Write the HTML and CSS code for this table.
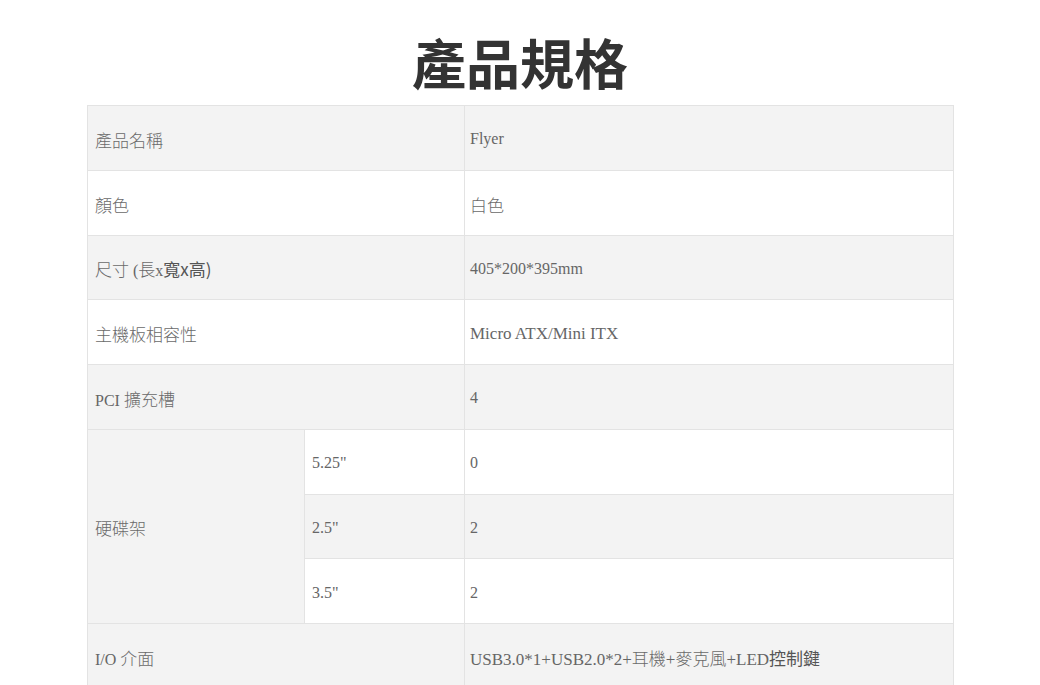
FILE: index.html
```html
<!DOCTYPE html>
<html lang="zh-Hant">
<head>
<meta charset="utf-8">
<title>產品規格</title>
<link rel="stylesheet" href="styles.css">
</head>
<body>
<main class="spec">
  <h1 class="spec-title">產品規格</h1>
  <table class="spec-table">
    <colgroup>
      <col class="c1"><col class="c2"><col class="c3">
    </colgroup>
    <tbody>
      <tr class="gray"><td colspan="2"><span class="cjk">產品名稱</span></td><td class="val">Flyer</td></tr>
      <tr><td colspan="2"><span class="cjk">顏色</span></td><td class="val"><span class="cjk">白色</span></td></tr>
      <tr class="gray"><td colspan="2"><span class="cjk">尺寸</span> (<span class="cjk">長</span>x<span class="sans">寬x高)</span></td><td class="val">405*200*395mm</td></tr>
      <tr><td colspan="2"><span class="cjk">主機板相容性</span></td><td class="val wide">Micro ATX/Mini ITX</td></tr>
      <tr class="gray"><td colspan="2">PCI <span class="cjk">擴充槽</span></td><td class="val">4</td></tr>
      <tr><td rowspan="3" class="graycell"><span class="cjk">硬碟架</span></td><td>5.25"</td><td class="val">0</td></tr>
      <tr class="gray"><td>2.5"</td><td class="val">2</td></tr>
      <tr><td>3.5"</td><td class="val">2</td></tr>
      <tr class="gray"><td colspan="2">I/O <span class="cjk">介面</span></td><td class="val wide">USB3.0*1+USB2.0*2+<span class="cjk">耳機</span>+<span class="cjk">麥克風</span>+LED<span class="sans">控制鍵</span></td></tr>
    </tbody>
  </table>
</main>
</body>
</html>
```
FILE: styles.css
```css
html, body {
  margin: 0;
  padding: 0;
  background: #ffffff;
}

.spec {
  width: 866px;
  margin: 0 auto;
  padding-top: 27px;
}

.spec-title {
  margin: 0 0 8px;
  font-family: "Noto Sans CJK TC", "Noto Sans", sans-serif;
  font-weight: 700;
  font-size: 54px;
  line-height: 70px;
  color: #333333;
  text-align: center;
}

.spec-table {
  width: 866px;
  border-collapse: collapse;
  table-layout: fixed;
  font-family: "Liberation Serif", "Noto Sans CJK TC", serif;
  font-size: 16px;
  color: #666666;
}

.c1 { width: 217px; }
.c2 { width: 160px; }
.c3 { width: 489px; }

.spec-table tr {
  height: 64.75px;
}

.spec-table td {
  border: 1px solid #e3e3e3;
  padding: 3px 7px 0;
  vertical-align: middle;
  background: #ffffff;
}

.spec-table td.val {
  padding-left: 5px;
}

.spec-table td.wide {
  font-size: 17px;
}

.spec-table tr.gray td,
.spec-table td.graycell {
  background: #f3f3f3;
}

.cjk {
  font-family: "Noto Sans CJK TC", sans-serif;
  font-size: 17px;
  font-weight: 300;
  color: #6a6a6a;
}

.sans {
  font-family: "Noto Sans CJK TC", sans-serif;
  font-size: 17px;
  color: #555555;
}
```
